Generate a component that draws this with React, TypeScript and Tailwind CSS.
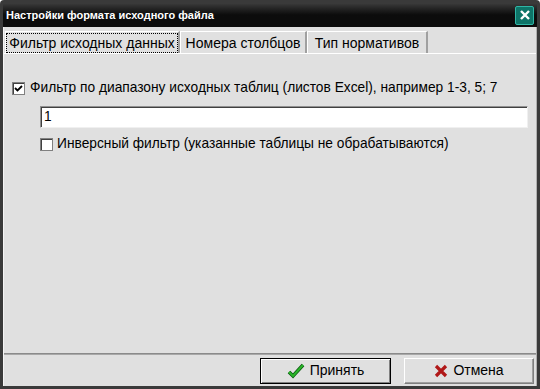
import { useState } from "react";

const font = { fontFamily: '"Liberation Sans", Arial, sans-serif' };

function CheckBox({ checked }: { checked: boolean }) {
  return (
    <div className="w-[13px] h-[13px] bg-white border border-[#808080] shadow-[inset_1px_1px_0_#404040] flex items-center justify-center">
      {checked && (
        <svg width="9" height="9" viewBox="0 0 9 9">
          <path d="M1 4 L3.5 6.5 L8 2" stroke="#000" strokeWidth="1.8" fill="none" />
        </svg>
      )}
    </div>
  );
}

const tabs = [
  { label: "Фильтр исходных данных", w: "w-[175px]" },
  { label: "Номера столбцов", w: "w-[127px]" },
  { label: "Тип нормативов", w: "w-[121px]" },
];

export default function App() {
  const [tab, setTab] = useState(0);

  return (
    <div
      className="w-[540px] h-[389px] bg-[#3a3a3a] rounded-t-[4px] p-[3px] flex flex-col select-none"
      style={font}
    >
      {/* title bar */}
      <div className="h-[24px] bg-gradient-to-b from-[#3c3c3c] via-[#0c0c0c] to-[#0c0c0c] flex items-center justify-between pl-[3px] pr-[3px]">
        <span className="text-white font-bold text-[11px]">Настройки формата исходного файла</span>
        <div className="w-[19px] h-[19px] bg-[#0e7468] border border-[#2fb5a5] rounded-[2px] flex items-center justify-center">
          <svg width="12" height="12" viewBox="0 0 12 12">
            <path d="M2 2 L10 10 M10 2 L2 10" stroke="#fff" strokeWidth="2.4" />
          </svg>
        </div>
      </div>

      <div className="flex-1 bg-[#e0e0e0] flex flex-col border-l border-[#f4f4f4] border-r border-r-[#b0b0b0]">
        {/* tabs */}
        <div className="flex items-end h-[26px] pl-[1px] pt-[3px]">
          {tabs.map((t, i) => (
            <button
              key={t.label}
              onClick={() => setTab(i)}
              className={
                "h-[22px] text-[14px] text-black leading-none border-t border-l border-white border-r-2 border-r-[#a0a0a0] bg-[#e0e0e0] flex items-center justify-center " +
                t.w
              }
            >
              <span className={i === tab ? "outline outline-1 outline-dotted outline-black px-[2px] py-[2px]" : "px-[2px]"}>
                {t.label}
              </span>
            </button>
          ))}
        </div>

        {/* panel */}
        <div className="flex-1 border-t border-white flex flex-col pl-[8px] pr-[8px] pt-[26px] text-[13.75px] leading-[16px] text-black">
          <div className="flex items-center gap-[5px]">
            <CheckBox checked />
            <span>Фильтр по диапазону исходных таблиц (листов Excel), например 1-3, 5; 7</span>
          </div>
          <div className="ml-[28px] mt-[10px] h-[22px] bg-white border border-[#909090] border-r-[#f0f0f0] border-b-[#f0f0f0] shadow-[inset_1px_1px_0_#404040] flex items-center pl-[3px]">
            1
          </div>
          <div className="ml-[28px] mt-[8px] flex items-center gap-[4px]">
            <CheckBox checked={false} />
            <span>Инверсный фильтр (указанные таблицы не обрабатываются)</span>
          </div>
        </div>

        {/* separator */}
        <div className="h-[2px] bg-[#8a8a8a] border-b border-[#a8a8a8]" />

        {/* buttons */}
        <div className="h-[31px] flex items-center justify-end gap-[13px] pr-[2px]">
          <button className="w-[131px] h-[26px] border border-black bg-[#e0e0e0] shadow-[inset_1px_1px_0_#fff,inset_-1px_-1px_0_#808080] flex items-center justify-center gap-[5px] text-[14px]">
            <svg width="18" height="16" viewBox="0 0 18 16">
              <path d="M2 9 L6 13 L16 2" stroke="#0a5a10" strokeWidth="3.6" fill="none" />
              <path d="M2 9 L6 13 L16 2" stroke="#2ab52a" strokeWidth="2" fill="none" />
            </svg>
            Принять
          </button>
          <button className="w-[130px] h-[26px] bg-[#e0e0e0] border border-white border-r-[#808080] border-b-[#808080] shadow-[inset_-1px_-1px_0_#a0a0a0] flex items-center justify-center gap-[5px] text-[14px]">
            <svg width="14" height="14" viewBox="0 0 14 14">
              <path d="M2 2 L12 12 M12 2 L2 12" stroke="#b01818" strokeWidth="3.2" />
            </svg>
            Отмена
          </button>
        </div>
      </div>
    </div>
  );
}
